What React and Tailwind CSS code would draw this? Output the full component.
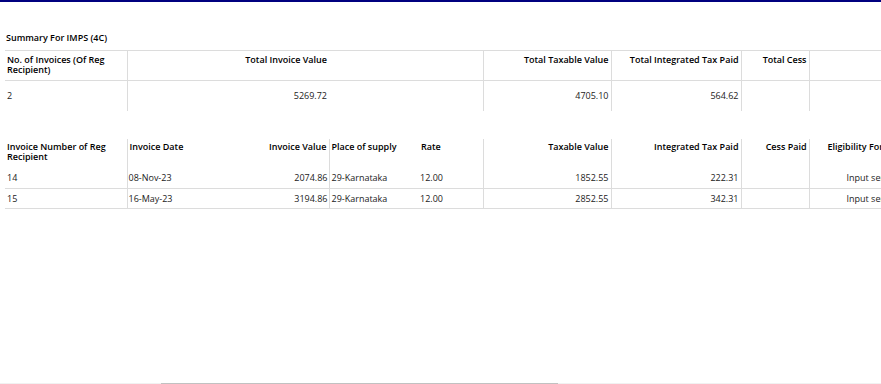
const summaryCols = [122, 202, 154, 128, 130, 68, 120];
const detailCols = [122, 102, 100, 90, 64, 128, 130, 68, 140];

const cell = "px-[2px] text-[9px] leading-[10px]";

function SummaryTable() {
  return (
    <table className="table-fixed border-collapse" style={{ width: summaryCols.reduce((a, b) => a + b, 0) }}>
      <colgroup>
        {summaryCols.map((w, i) => (
          <col key={i} style={{ width: w }} />
        ))}
      </colgroup>
      <thead>
        <tr className="h-[30px] border-y border-[#dcdcdc] align-top">
          <th className={`${cell} pt-[4px] text-left font-semibold border-r border-[#dcdcdc]`}>
            No. of Invoices (Of Reg Recipient)
          </th>
          <th className={`${cell} pt-[4px] text-right font-semibold`}>Total Invoice Value</th>
          <th className={`${cell} border-r border-[#dcdcdc]`}></th>
          <th className={`${cell} pt-[4px] text-right font-semibold border-r border-[#dcdcdc]`}>Total Taxable Value</th>
          <th className={`${cell} pt-[4px] text-right font-semibold border-r border-[#dcdcdc]`}>Total Integrated Tax Paid</th>
          <th className={`${cell} pt-[4px] text-right font-semibold border-r border-[#dcdcdc]`}>Total Cess</th>
          <th className={cell}></th>
        </tr>
      </thead>
      <tbody>
        <tr className="h-[30px] align-middle text-[#222]">
          <td className={`${cell} text-left border-r border-[#dcdcdc]`}>2</td>
          <td className={`${cell} text-right`}>5269.72</td>
          <td className={`${cell} border-r border-[#dcdcdc]`}></td>
          <td className={`${cell} text-right border-r border-[#dcdcdc]`}>4705.10</td>
          <td className={`${cell} text-right border-r border-[#dcdcdc]`}>564.62</td>
          <td className={`${cell} border-r border-[#dcdcdc]`}></td>
          <td className={cell}></td>
        </tr>
      </tbody>
    </table>
  );
}

const rows = [
  { no: "14", date: "08-Nov-23", value: "2074.86", pos: "29-Karnataka", rate: "12.00", taxable: "1852.55", igst: "222.31" },
  { no: "15", date: "16-May-23", value: "3194.86", pos: "29-Karnataka", rate: "12.00", taxable: "2852.55", igst: "342.31" },
];

function DetailTable() {
  return (
    <table className="table-fixed border-collapse" style={{ width: detailCols.reduce((a, b) => a + b, 0) }}>
      <colgroup>
        {detailCols.map((w, i) => (
          <col key={i} style={{ width: w }} />
        ))}
      </colgroup>
      <thead>
        <tr className="h-[30px] align-top">
          <th className={`${cell} pt-[3px] text-left font-semibold border-r border-[#dcdcdc]`}>
            Invoice Number of Reg Recipient
          </th>
          <th className={`${cell} pt-[3px] text-left font-semibold`}>Invoice Date</th>
          <th className={`${cell} pt-[3px] text-right font-semibold border-r border-[#dcdcdc]`}>Invoice Value</th>
          <th className={`${cell} pt-[3px] text-left font-semibold`}>Place of supply</th>
          <th className={`${cell} pt-[3px] text-left font-semibold border-r border-[#dcdcdc]`}>Rate</th>
          <th className={`${cell} pt-[3px] text-right font-semibold border-r border-[#dcdcdc]`}>Taxable Value</th>
          <th className={`${cell} pt-[3px] text-right font-semibold border-r border-[#dcdcdc]`}>Integrated Tax Paid</th>
          <th className={`${cell} pt-[3px] text-right font-semibold border-r border-[#dcdcdc]`}>Cess Paid</th>
          <th className={`${cell} pt-[3px] pl-[18px] text-left font-semibold whitespace-nowrap`}>Eligibility For ITC</th>
        </tr>
      </thead>
      <tbody>
        {rows.map((r) => (
          <tr key={r.no} className="h-[20px] align-middle border-b border-[#dcdcdc] text-[#222]">
            <td className={`${cell} text-left border-r border-[#dcdcdc]`}>{r.no}</td>
            <td className={`${cell} pl-[1px] text-left`}>{r.date}</td>
            <td className={`${cell} pr-[1px] text-right border-r border-[#dcdcdc]`}>{r.value}</td>
            <td className={`${cell} text-left`}>{r.pos}</td>
            <td className={`${cell} pl-[1px] text-left border-r border-[#dcdcdc]`}>{r.rate}</td>
            <td className={`${cell} text-right border-r border-[#dcdcdc]`}>{r.taxable}</td>
            <td className={`${cell} text-right border-r border-[#dcdcdc]`}>{r.igst}</td>
            <td className={`${cell} border-r border-[#dcdcdc]`}></td>
            <td className={`${cell} pl-[37px] text-left whitespace-nowrap`}>Input services</td>
          </tr>
        ))}
      </tbody>
    </table>
  );
}

export default function App() {
  return (
    <div
      className="flex h-[384px] w-[881px] flex-col overflow-hidden bg-white text-black"
      style={{ fontFamily: '"Open Sans", "Noto Sans", sans-serif' }}
    >
      <div className="h-[2px] shrink-0 bg-[#00007f]" />
      <div className="min-h-0 flex-1 overflow-hidden pl-[5px]">
        <div className="pt-[30px] pl-[1px] text-[9px] leading-[12px] font-semibold">Summary For IMPS (4C)</div>
        <div className="mt-[6px]">
          <SummaryTable />
        </div>
        <div className="mt-[28px]">
          <DetailTable />
        </div>
      </div>
      <div className="flex h-[1px] shrink-0 bg-[#f1f1f1]">
        <div className="ml-[161px] w-[397px] bg-[#c1c1c1]" />
      </div>
    </div>
  );
}
